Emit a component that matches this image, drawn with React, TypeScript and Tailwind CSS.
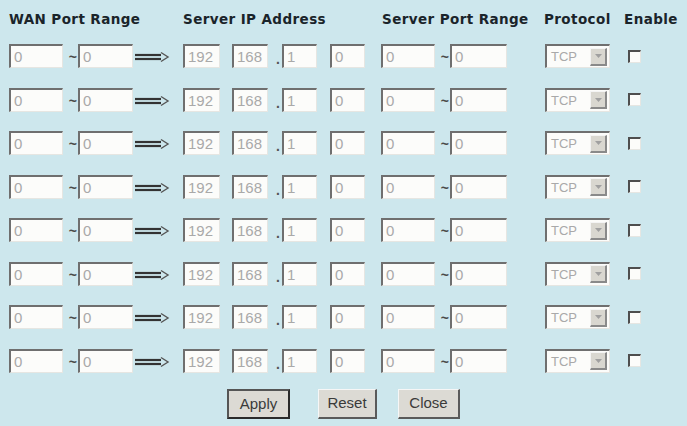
import React from 'react';

type Rule = {
  wanFrom: string;
  wanTo: string;
  ip: [string, string, string, string];
  portFrom: string;
  portTo: string;
  protocol: string;
  enabled: boolean;
};

const rules: Rule[] = Array.from({ length: 8 }, () => ({
  wanFrom: '0',
  wanTo: '0',
  ip: ['192', '168', '1', '0'],
  portFrom: '0',
  portTo: '0',
  protocol: 'TCP',
  enabled: false,
}));

// classic sunken text field
function Field({ value, className }: { value: string; className: string }) {
  return (
    <div
      className={`h-[24px] flex items-center bg-[#fcfcfa] border-t-2 border-l-2 border-t-[#6f6f6f] border-l-[#6f6f6f] border-b border-r border-b-[#e6e6e2] border-r-[#e6e6e2] pl-[3px] text-[15px] leading-none text-[#a9a9a9] ${className}`}
    >
      {value}
    </div>
  );
}

function Tilde() {
  return (
    <span className="w-[15px] h-[24px] flex items-end justify-end pr-[1px] pb-[4px] text-[14px] leading-none font-bold text-[#4a4a4a]">
      ~
    </span>
  );
}

function Arrow() {
  return (
    <span className="w-[50px] h-[24px] flex items-center">
      <svg width="36" height="12" viewBox="0 0 36 12" className="ml-[2px] mt-[2px]">
        <line x1="0" y1="4" x2="26" y2="4" stroke="#333" strokeWidth="2.2" />
        <line x1="0" y1="8" x2="26" y2="8" stroke="#333" strokeWidth="2.2" />
        <polyline points="26,1.5 33,6 26,10.5" fill="none" stroke="#555" strokeWidth="1.4" />
      </svg>
    </span>
  );
}

function ProtocolSelect({ value }: { value: string }) {
  return (
    <div className="w-[65px] h-[24px] flex items-center bg-[#fcfcfa] border-t-2 border-l-2 border-t-[#6f6f6f] border-l-[#6f6f6f] border-b border-r border-b-[#e6e6e2] border-r-[#e6e6e2]">
      <span className="flex-1 pl-[4px] text-[13px] leading-none text-[#a9a9a9]">{value}</span>
      <span className="w-[17px] h-[18px] mr-[2px] flex items-center justify-center bg-[#d9d7d0] border-t border-l border-t-[#f4f4f4] border-l-[#f4f4f4] border-b-2 border-r-2 border-b-[#8a8a8a] border-r-[#8a8a8a]">
        <svg width="7" height="4" viewBox="0 0 7 4">
          <polygon points="0,0 7,0 3.5,4" fill="#a0a0a0" />
        </svg>
      </span>
    </div>
  );
}

function Checkbox() {
  return (
    <span className="w-[13px] h-[13px] bg-[#fcfcfa] border-t-2 border-l-2 border-t-[#4e4e4e] border-l-[#4e4e4e] border-b border-r border-b-[#e6e6e2] border-r-[#e6e6e2]" />
  );
}

function RuleRow({ rule }: { rule: Rule }) {
  return (
    <div className="flex items-center h-[24px]">
      <Field value={rule.wanFrom} className="w-[54px]" />
      <Tilde />
      <Field value={rule.wanTo} className="w-[55px]" />
      <Arrow />
      <Field value={rule.ip[0]} className="w-[37px]" />
      <span className="w-[12px]" />
      <Field value={rule.ip[1]} className="w-[36px]" />
      <span className="w-[14px] h-[24px] flex items-end justify-end pr-[2px] pb-[2px] text-[14px] leading-none font-bold text-[#555]">
        .
      </span>
      <Field value={rule.ip[2]} className="w-[35px]" />
      <span className="w-[13px]" />
      <Field value={rule.ip[3]} className="w-[35px]" />
      <span className="w-[16px]" />
      <Field value={rule.portFrom} className="w-[54px]" />
      <Tilde />
      <Field value={rule.portTo} className="w-[57px]" />
      <span className="w-[38px]" />
      <ProtocolSelect value={rule.protocol} />
      <span className="w-[18px]" />
      <Checkbox />
    </div>
  );
}

function Button({ label, primary, className }: { label: string; primary?: boolean; className: string }) {
  return (
    <button
      className={`h-[30px] flex items-center justify-center bg-[#dcdad4] text-[15px] text-[#3a3a3a] font-['Liberation_Sans',Arial,sans-serif] ${
        primary
          ? 'border-2 border-[#2a2a2a] border-t-[#555] border-l-[#555]'
          : 'border-t border-l border-t-[#f6f6f6] border-l-[#f6f6f6] border-b-2 border-r-2 border-b-[#5a5a5a] border-r-[#5a5a5a]'
      } ${className}`}
    >
      {label}
    </button>
  );
}

export default function App() {
  return (
    <div className="w-[687px] h-[426px] bg-[#cde7ed] pl-[9px] pt-[10px] font-['Liberation_Sans',Arial,sans-serif] overflow-hidden">
      <div className="flex h-[18px] items-center text-[13.5px] font-bold text-[#1a242a] font-['DejaVu_Sans',Verdana,sans-serif] tracking-[0.03em]">
        <span className="w-[174px]">WAN Port Range</span>
        <span className="w-[199px]">Server IP Address</span>
        <span className="w-[162px]">Server Port Range</span>
        <span className="w-[80px]">Protocol</span>
        <span>Enable</span>
      </div>
      <div className="mt-[16px] flex flex-col gap-[19.5px]">
        {rules.map((rule, i) => (
          <RuleRow key={i} rule={rule} />
        ))}
      </div>
      <div className="mt-[16.5px] flex justify-center pr-[9px]">
        <Button label="Apply" primary className="w-[63px]" />
        <Button label="Reset" className="w-[59px] ml-[28px]" />
        <Button label="Close" className="w-[62px] ml-[21px]" />
      </div>
    </div>
  );
}
